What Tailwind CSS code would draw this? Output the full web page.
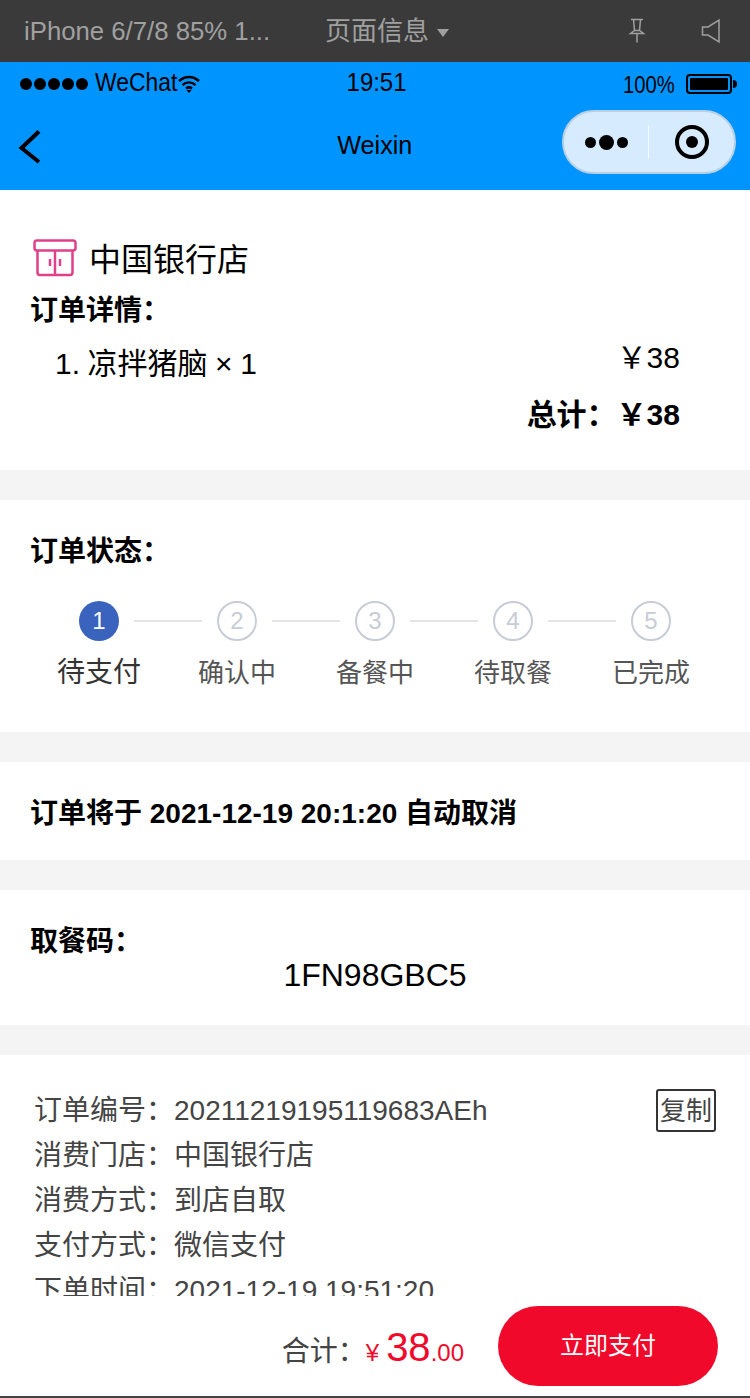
<!DOCTYPE html>
<html lang="zh">
  <head>
    <meta charset="UTF-8" />
    <meta name="viewport" content="width=device-width, initial-scale=1.0" />
    <script src="https://cdn.jsdelivr.net/npm/@tailwindcss/browser@4"></script>
    <title>订单详情</title>
  </head>
  <body class="bg-white w-[750px] h-[1398px] overflow-hidden font-['Liberation_Sans','Noto_Sans_CJK_SC',sans-serif] flex flex-col">
    <!-- devtools bar -->
    <div class="h-[62px] shrink-0 bg-[#3a3a3a] flex items-center text-[#a0a0a0] text-[26px]">
      <div class="w-[300px] pl-[24px]"><span class="block whitespace-nowrap origin-left scale-x-[0.99]">iPhone 6/7/8 85% 1...</span></div>
      <span class="ml-[25px] flex items-center gap-[8px] mt-[1px]">页面信息<span class="w-0 h-0 border-x-[6px] border-x-transparent border-t-[8px] border-t-[#a0a0a0] mt-[3px]"></span></span>
      <svg class="ml-[178px]" width="20" height="26" viewBox="0 0 20 26" fill="none" stroke="#a0a0a0" stroke-width="1.5"><path d="M4 1.5h12M6.5 1.5l1 11M13.5 1.5l-1 11M3.5 15.500l4-3h5l4 3zM10 15.500v9" /></svg>
      <svg class="ml-[54px]" width="20" height="26" viewBox="0 0 20 26" fill="none" stroke="#a0a0a0" stroke-width="1.5"><path d="M18 2v22L7 17H1.500V9H7z" /></svg>
    </div>
    <!-- wechat nav -->
    <div class="h-[128px] shrink-0 bg-[#0094ff] text-black flex flex-col">
      <div class="h-[44px] flex items-center pl-[20px] pr-[13px] justify-between">
        <div class="flex items-center w-[200px]">
          <span class="flex gap-[2px]">
            <i class="w-[12px] h-[12px] rounded-full bg-black"></i><i class="w-[12px] h-[12px] rounded-full bg-black"></i><i class="w-[12px] h-[12px] rounded-full bg-black"></i><i class="w-[12px] h-[12px] rounded-full bg-black"></i><i class="w-[12px] h-[12px] rounded-full bg-black"></i>
          </span>
          <span class="ml-[7px] -mt-[4px] text-[26px] whitespace-nowrap origin-left scale-x-[0.88] w-[82px]">WeChat</span>
          <svg width="24" height="20" viewBox="0 0 24 20" fill="none" stroke="black" stroke-width="2.500"><path d="M2 7c6-5.500 14-5.500 20 0M5.500 11c4-3.500 9-3.500 13 0M9 14.500c2-1.500 4-1.500 6 0" /><path d="M9.500 16h5l-2.500 3z" fill="black" stroke="none" /></svg>
        </div>
        <span class="text-[26px] -mt-[4px] origin-center scale-x-[0.92] -translate-x-[2px]">19:51</span>
        <div class="flex items-center w-[200px] justify-end">
          <span class="text-[23px] origin-right scale-x-[0.88] mr-[11px] mt-[2px]">100%</span>
          <span class="w-[46px] h-[20px] border-[2px] border-black rounded-[4px] p-[2px] flex"><span class="flex-1 bg-black rounded-[1px]"></span></span>
          <span class="w-[4px] h-[8px] ml-[1px] bg-black rounded-r-full"></span>
        </div>
      </div>
      <div class="flex-1 relative flex items-center justify-center">
        <svg class="absolute left-[18px] top-[23px]" width="24" height="36" viewBox="0 0 24 36" fill="none" stroke="black" stroke-width="4"><path d="M21 2.500 3.500 19 21 33" /></svg>
        <span class="text-[26px] mt-[-6px] origin-center scale-x-[0.97]">Weixin</span>
        <div class="absolute left-[562px] top-[4px] w-[174px] h-[64px] rounded-full bg-[#d6ebfd] border-[2px] border-[#b9d0e4] flex items-center">
          <div class="w-[84px] flex items-center justify-center gap-[3px]">
            <i class="w-[11px] h-[11px] rounded-full bg-black"></i><i class="w-[15px] h-[15px] rounded-full bg-black"></i><i class="w-[11px] h-[11px] rounded-full bg-black"></i>
          </div>
          <div class="w-[1px] h-[34px] bg-white/70"></div>
          <div class="flex-1 flex items-center justify-center">
            <div class="w-[34px] h-[34px] rounded-full border-[4px] border-black flex items-center justify-center"><i class="w-[12px] h-[12px] rounded-full bg-black"></i></div>
          </div>
        </div>
      </div>
    </div>
    <!-- page -->
    <div class="flex-1 min-h-0 overflow-hidden bg-[#f4f4f4] text-black">
      <section class="h-[280px] bg-white px-[30px] pt-[46px]">
        <div class="flex items-center h-[46px]">
          <svg class="ml-[3px] -mt-[2px]" width="44" height="38" viewBox="0 0 44 38" fill="none" stroke="#e0408a" stroke-width="2.500"><rect x="1.500" y="1.500" width="41" height="10" rx="2.500" /><path d="M4.500 11.500v22a2.500 2.500 0 0 0 2.500 2.500h30a2.500 2.500 0 0 0 2.500-2.500v-22M22 11.500V36M17 20v7M27 20v7" /></svg>
          <span class="ml-[12px] mt-[2px] text-[32px]">中国银行店</span>
        </div>
        <div class="text-[28px] font-bold leading-[38px] mt-[10px]">订单详情：</div>
        <div class="flex justify-between items-start pl-[25px] pr-[40px] mt-[13px]">
          <span class="text-[30px] leading-[42px] [word-spacing:-0.8px]">1. 凉拌猪脑 × 1</span>
          <span class="text-[30px] leading-[40px] -mt-[5px]">￥38</span>
        </div>
        <div class="flex justify-end pr-[40px] mt-[10px] text-[30px] font-bold leading-[40px]">总计：￥38</div>
      </section>
      <section class="h-[232px] mt-[30px] bg-white px-[30px] pt-[33px]">
        <div class="text-[28px] font-bold leading-[38px]">订单状态：</div>
        <div class="grid grid-cols-5 w-[690px] mt-[30px]">
          <div class="relative flex flex-col items-center">
            <span class="w-[40px] h-[40px] rounded-full bg-[#3a63be] text-white text-[24px] flex items-center justify-center">1</span>
            <span class="text-[#333] text-[28px] leading-[40px] mt-[12px]">待支付</span>
            <i class="absolute left-[104px] top-[19px] w-[68px] h-[2px] bg-[#e2e4e8]"></i>
          </div>
          <div class="relative flex flex-col items-center">
            <span class="w-[40px] h-[40px] rounded-full border-[2px] border-[#c8ccd6] text-[#c8ccd6] text-[24px] flex items-center justify-center">2</span>
            <span class="text-[#555] text-[26px] leading-[40px] mt-[12px]">确认中</span>
            <i class="absolute left-[104px] top-[19px] w-[68px] h-[2px] bg-[#e2e4e8]"></i>
          </div>
          <div class="relative flex flex-col items-center">
            <span class="w-[40px] h-[40px] rounded-full border-[2px] border-[#c8ccd6] text-[#c8ccd6] text-[24px] flex items-center justify-center">3</span>
            <span class="text-[#555] text-[26px] leading-[40px] mt-[12px]">备餐中</span>
            <i class="absolute left-[104px] top-[19px] w-[68px] h-[2px] bg-[#e2e4e8]"></i>
          </div>
          <div class="relative flex flex-col items-center">
            <span class="w-[40px] h-[40px] rounded-full border-[2px] border-[#c8ccd6] text-[#c8ccd6] text-[24px] flex items-center justify-center">4</span>
            <span class="text-[#555] text-[26px] leading-[40px] mt-[12px]">待取餐</span>
            <i class="absolute left-[104px] top-[19px] w-[68px] h-[2px] bg-[#e2e4e8]"></i>
          </div>
          <div class="flex flex-col items-center">
            <span class="w-[40px] h-[40px] rounded-full border-[2px] border-[#c8ccd6] text-[#c8ccd6] text-[24px] flex items-center justify-center">5</span>
            <span class="text-[#555] text-[26px] leading-[40px] mt-[12px]">已完成</span>
          </div>
        </div>
      </section>
      <section class="h-[98px] mt-[30px] bg-white px-[30px] pt-[6px] flex items-center text-[28px] font-bold">订单将于 2021-12-19 20:1:20 自动取消</section>
      <section class="h-[135px] mt-[30px] bg-white px-[30px] pt-[33px]">
        <div class="text-[28px] font-bold leading-[38px]">取餐码：</div>
        <div class="text-[32px] leading-[36px] text-center -mt-[4px]">1FN98GBC5</div>
      </section>
      <section class="mt-[30px] bg-white pl-[34px] pt-[33px] text-[#444] text-[28px] leading-[45px] relative h-[260px]">
        <div>订单编号：20211219195119683AEh</div>
        <div>消费门店：中国银行店</div>
        <div>消费方式：到店自取</div>
        <div>支付方式：微信支付</div>
        <div>下单时间：2021-12-19 19:51:20</div>
        <span class="absolute right-[34px] top-[34px] w-[60px] h-[43px] border-[2px] border-[#333] rounded-[3px] text-[26px] leading-[40px] text-center">复制</span>
      </section>
    </div>
    <!-- footer -->
    <div class="h-[102px] shrink-0 bg-white border-b-[2px] border-[#444] flex items-center justify-end pr-[32px]">
      <div class="flex items-baseline text-[#f0092a] mt-[2px]">
        <span class="text-[#444] text-[28px]">合计：</span>
        <span class="text-[24px]">¥</span>
        <span class="text-[40px] ml-[7px]">38</span>
        <span class="text-[24px]">.00</span>
      </div>
      <button class="ml-[34px] w-[220px] h-[80px] rounded-full bg-[#f0092a] text-white text-[24px]">立即支付</button>
    </div>
  </body>
</html>
